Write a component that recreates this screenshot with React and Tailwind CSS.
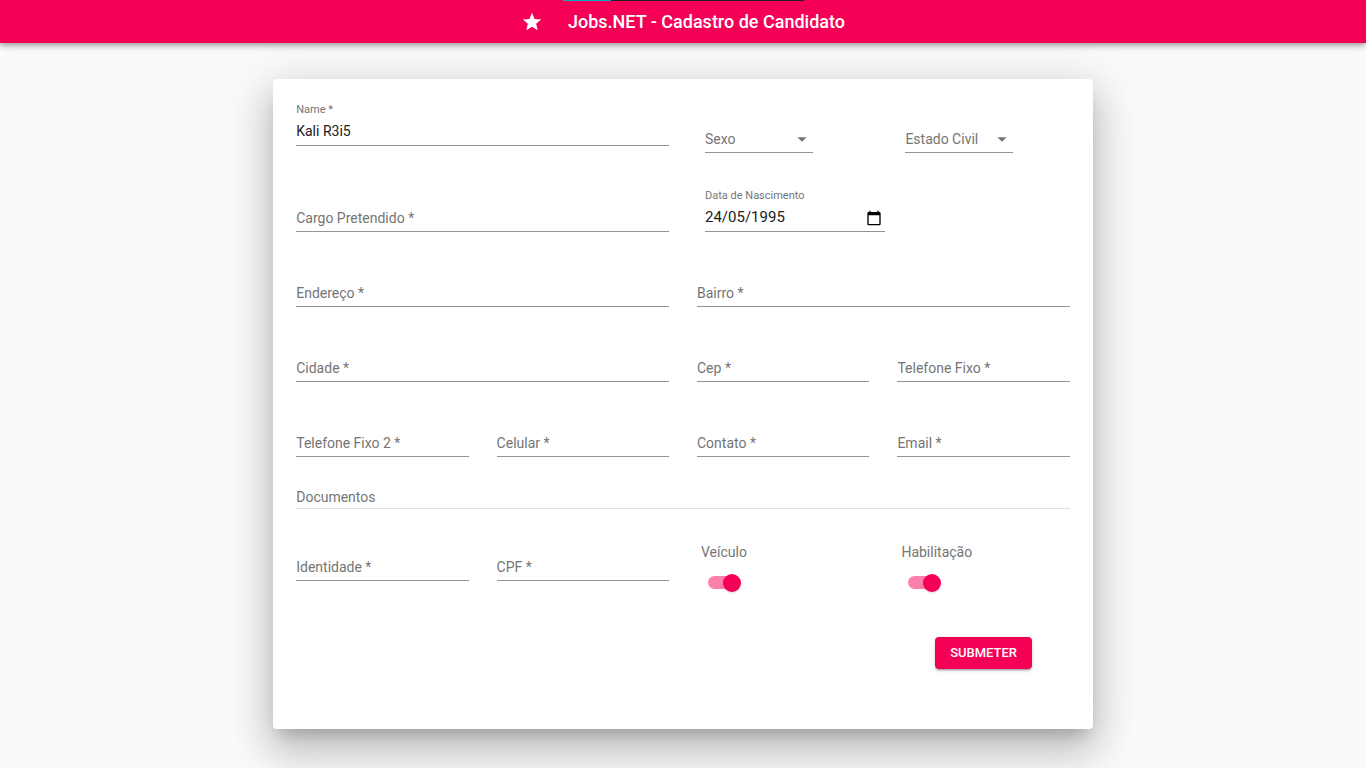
import { useId, useState } from "react";

const lineClasses =
  "col-start-1 row-start-1 h-11 w-full appearance-none rounded-none border-b border-[#949494] bg-transparent pt-[14px] leading-5 text-[#212121] outline-none focus:border-[#f50057]";

function FieldLabel({ htmlFor, raised, children }) {
  return (
    <label
      htmlFor={htmlFor}
      className={
        "pointer-events-none col-start-1 row-start-1 whitespace-nowrap text-[#757575] " +
        (raised ? "self-start text-[11px] leading-4" : "self-end pb-1 text-[14px] leading-5")
      }
    >
      {children}
    </label>
  );
}

function TextField({ label, initial = "", className = "" }) {
  const id = useId();
  const [value, setValue] = useState(initial);
  const [focused, setFocused] = useState(false);
  return (
    <div className={"grid " + className}>
      <input
        id={id}
        type="text"
        required
        value={value}
        onChange={(e) => setValue(e.target.value)}
        onFocus={() => setFocused(true)}
        onBlur={() => setFocused(false)}
        className={lineClasses + " text-[14px]"}
      />
      <FieldLabel htmlFor={id} raised={focused || value !== ""}>
        {label} *
      </FieldLabel>
    </div>
  );
}

function SelectField({ label, options }) {
  const id = useId();
  const [value, setValue] = useState("");
  return (
    <div className="mt-[7px] mb-1 ml-2 grid w-[108px]">
      <select
        id={id}
        value={value}
        onChange={(e) => setValue(e.target.value)}
        className={lineClasses + " text-[14px]"}
      >
        <option value="" />
        {options.map((option) => (
          <option key={option}>{option}</option>
        ))}
      </select>
      <FieldLabel htmlFor={id} raised={value !== ""}>
        {label}
      </FieldLabel>
      <svg
        viewBox="0 0 24 24"
        className="pointer-events-none col-start-1 row-start-1 mb-[3px] size-[22px] self-end justify-self-end fill-[#757575]"
        aria-hidden="true"
      >
        <path d="M7 10l5 5 5-5z" />
      </svg>
    </div>
  );
}

function DateField({ label, initial }) {
  const id = useId();
  const [value, setValue] = useState(initial);
  return (
    <div className="ml-2 grid w-[180px]">
      <input
        id={id}
        type="text"
        inputMode="numeric"
        value={value}
        onChange={(e) => setValue(e.target.value)}
        className={lineClasses + " text-[15px]"}
      />
      <FieldLabel htmlFor={id} raised>
        {label}
      </FieldLabel>
      <button
        type="button"
        aria-label="Abrir calendário"
        className="col-start-1 row-start-1 mr-[3px] mb-[6px] self-end justify-self-end"
      >
        <svg viewBox="0 0 24 24" className="size-4 fill-black" aria-hidden="true">
          <path d="M20 3h-1V1h-2v2H7V1H5v2H4c-1.1 0-2 .9-2 2v16c0 1.1.9 2 2 2h16c1.1 0 2-.9 2-2V5c0-1.1-.9-2-2-2zm0 18H4V8h16v13z" />
        </svg>
      </button>
    </div>
  );
}

function SwitchField({ label }) {
  const id = useId();
  return (
    <div className="flex flex-col items-start gap-[15px] pt-[6px] pl-1">
      <label htmlFor={id} className="text-[14px] leading-[18px] text-[#757575]">
        {label}
      </label>
      <input
        id={id}
        type="checkbox"
        role="switch"
        defaultChecked
        className="ml-[7px] flex h-[13px] w-[31px] cursor-pointer appearance-none items-center rounded-full bg-black/40 before:size-[18px] before:shrink-0 before:rounded-full before:bg-[#fafafa] before:shadow checked:justify-end checked:bg-[#f50057]/50 checked:before:-mr-[2px] checked:before:bg-[#f50057]"
      />
    </div>
  );
}

export default function App() {
  return (
    <div className="flex min-h-screen flex-col bg-[#fafafa] font-[Roboto,sans-serif]">
      <header className="relative z-10 flex h-[43px] shrink-0 items-center justify-center gap-[25px] bg-[#f50057] text-white shadow-[0_2px_4px_-1px_rgba(0,0,0,0.2),0_4px_5px_0_rgba(0,0,0,0.14),0_1px_10px_0_rgba(0,0,0,0.12)]">
        <div className="absolute top-0 left-[563px] flex h-px w-[241px] bg-[#212121]">
          <div className="w-12 bg-[#00acc1]" />
        </div>
        <svg viewBox="0 0 24 24" className="size-[22px] fill-current" aria-hidden="true">
          <path d="M12 17.27L18.18 21l-1.64-7.03L22 9.24l-7.19-.61L12 2 9.19 8.63 2 9.24l5.46 4.73L5.82 21z" />
        </svg>
        <h1 className="text-[18px] leading-7 font-medium">Jobs.NET - Cadastro de Candidato</h1>
      </header>

      <main className="flex justify-center pt-9 pb-[39px]">
        <form
          onSubmit={(e) => e.preventDefault()}
          className="w-3/5 min-w-[720px] rounded bg-white px-[23px] pt-[23px] pb-[60px] shadow-[0_11px_15px_-7px_rgba(0,0,0,0.2),0_24px_38px_3px_rgba(0,0,0,0.14),0_9px_46px_8px_rgba(0,0,0,0.12)]"
        >
          <div className="grid grid-cols-4 items-start gap-x-7 gap-y-[31px]">
            <TextField label="Name" initial="Kali R3i5" className="col-span-2" />
            <SelectField label="Sexo" options={["Masculino", "Feminino"]} />
            <SelectField label="Estado Civil" options={["Solteiro", "Casado"]} />

            <TextField label="Cargo Pretendido" className="col-span-2" />
            <div className="col-span-2">
              <DateField label="Data de Nascimento" initial="24/05/1995" />
            </div>

            <TextField label="Endereço" className="col-span-2" />
            <TextField label="Bairro" className="col-span-2" />

            <TextField label="Cidade" className="col-span-2" />
            <TextField label="Cep" />
            <TextField label="Telefone Fixo" />

            <TextField label="Telefone Fixo 2" />
            <TextField label="Celular" />
            <TextField label="Contato" />
            <TextField label="Email" />

            <h2 className="col-span-4 border-b border-black/12 pb-[2px] text-[14px] leading-[18px] text-[#757575]">
              Documentos
            </h2>
          </div>

          <div className="grid grid-cols-4 items-start gap-x-7 pt-7">
            <TextField label="Identidade" />
            <TextField label="CPF" />
            <SwitchField label="Veículo" />
            <SwitchField label="Habilitação" />
          </div>

          <div className="grid grid-cols-4 gap-x-7 pt-12">
            <button
              type="submit"
              className="col-start-4 h-8 w-[97px] justify-self-center rounded bg-[#f50057] text-[13px] leading-5 font-medium text-white uppercase shadow-[0_3px_1px_-2px_rgba(0,0,0,0.2),0_2px_2px_0_rgba(0,0,0,0.14),0_1px_5px_0_rgba(0,0,0,0.12)]"
            >
              Submeter
            </button>
          </div>
        </form>
      </main>
    </div>
  );
}
